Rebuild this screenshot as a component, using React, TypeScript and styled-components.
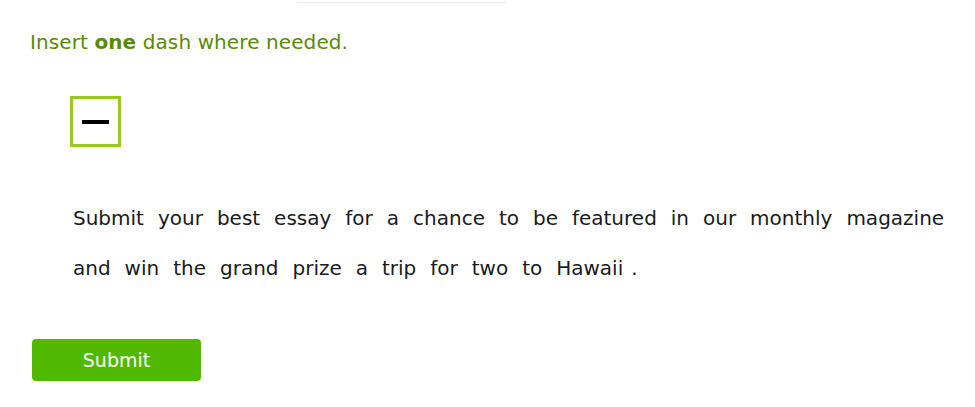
import React from 'react';
import styled, { createGlobalStyle } from 'styled-components';

const GlobalStyle = createGlobalStyle`
  html, body {
    margin: 0;
    padding: 0;
    background: #ffffff;
  }
  body {
    font-family: "DejaVu Sans", Verdana, sans-serif;
  }
`;

const Page = styled.div`
  display: flex;
  flex-direction: column;
  align-items: flex-start;
  padding: 2px 0 0 30px;
`;

const TopRule = styled.div`
  width: 208px;
  height: 1px;
  margin-left: 268px;
  background: #e8e8e8;
`;

const Instruction = styled.p`
  margin: 27px 0 0;
  font-size: 20px;
  letter-spacing: 0.1px;
  color: #5a8a00;

  strong {
    font-weight: bold;
  }
`;

const DashTray = styled.div`
  margin: 42px 0 0 40px;
  display: flex;
  gap: 12px;
`;

const DashTile = styled.div`
  width: 45px;
  height: 45px;
  border: 3px solid #9ac71c;
  display: flex;
  align-items: center;
  justify-content: center;
  background: #ffffff;
  cursor: grab;
`;

const DashMark = styled.span`
  display: block;
  width: 27px;
  height: 4px;
  background: #000000;
`;

const Sentence = styled.div`
  margin: 46px 0 0 39px;
  font-size: 20px;
  line-height: 50px;
  word-spacing: -0.4px;
  color: #1a1a1a;
`;

const Word = styled.span<{ $punct?: boolean }>`
  display: inline-block;
  padding: ${p => (p.$punct ? '0 4px' : '0 4px')};
`;

const SubmitButton = styled.button`
  margin: 46px 0 0 2px;
  width: 169px;
  height: 42px;
  border: none;
  border-radius: 4px;
  background: #51b800;
  color: #ffffff;
  font-family: "DejaVu Sans", Verdana, sans-serif;
  font-size: 19px;
  cursor: pointer;
`;

const words = 'Submit your best essay for a chance to be featured in our monthly magazine and win the grand prize a trip for two to Hawaii'.split(' ');

export default function App() {
  return (
    <>
      <GlobalStyle />
      <Page>
        <TopRule />
        <Instruction>
          Insert <strong>one</strong> dash where needed.
        </Instruction>
        <DashTray>
          <DashTile>
            <DashMark />
          </DashTile>
        </DashTray>
        <Sentence>
          {words.map((w, i) => (
            <React.Fragment key={i}>
              {i > 0 && ' '}
              <Word>{w}</Word>
            </React.Fragment>
          ))}
          <Word $punct>.</Word>
        </Sentence>
        <SubmitButton>Submit</SubmitButton>
      </Page>
    </>
  );
}
